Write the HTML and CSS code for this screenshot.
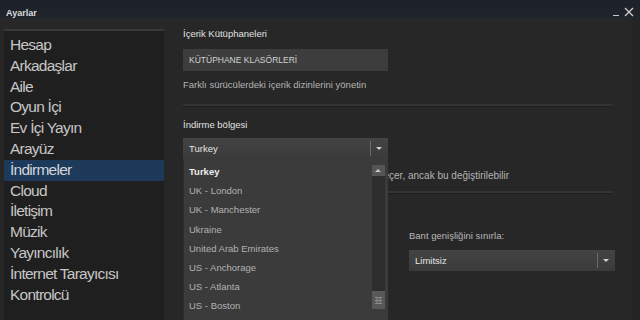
FILE: index.html
```html
<!DOCTYPE html>
<html lang="tr">
<head>
<meta charset="UTF-8">
<meta name="viewport" content="width=device-width, initial-scale=1.0">
<title>Ayarlar</title>
<link rel="stylesheet" href="styles.css">
</head>
<body>

<div class="window">
    <div class="titlebar">
        <span class="title">Ayarlar</span>
        <span class="controls">
            <span class="min"></span>
            <svg class="close" width="10" height="10" viewBox="0 0 10 10"><path d="M1 1 L9 9 M9 1 L1 9" stroke="#c8c8c8" stroke-width="1.4"/></svg>
        </span>
    </div>

    <div class="main">
        <ul class="sidebar">
            <li>Hesap</li>
            <li>Arkadaşlar</li>
            <li>Aile</li>
            <li>Oyun İçi</li>
            <li>Ev İçi Yayın</li>
            <li>Arayüz</li>
            <li class="active">İndirmeler</li>
            <li>Cloud</li>
            <li>İletişim</li>
            <li>Müzik</li>
            <li>Yayıncılık</li>
            <li>İnternet Tarayıcısı</li>
            <li>Kontrolcü</li>
        </ul>

        <div class="content">
            <div class="heading">İçerik Kütüphaneleri</div>
            <div class="button">KÜTÜPHANE KLASÖRLERİ</div>
            <div class="desc">Farklı sürücülerdeki içerik dizinlerini yönetin</div>
            <div class="rule"></div>

            <div class="heading second">İndirme bölgesi</div>
            <div class="select-wrap">
                <div class="select">
                    <span>Turkey</span>
                    <span class="arrow"></span>
                </div>
                <div class="options">
                    <ul>
                        <li class="current">Turkey</li>
                        <li>UK - London</li>
                        <li>UK - Manchester</li>
                        <li>Ukraine</li>
                        <li>United Arab Emirates</li>
                        <li>US - Anchorage</li>
                        <li>US - Atlanta</li>
                        <li>US - Boston</li>
                    </ul>
                    <div class="scrollbar">
                        <div class="up"></div>
                        <div class="thumb">
                            <svg width="7" height="7" viewBox="0 0 7 7"><path d="M0 0.5H7M0 3.5H7M0 6.5H7M2 0V7M5 0V7" stroke="#8a8a8a" stroke-width="1"/></svg>
                        </div>
                    </div>
                </div>
            </div>
            <div class="desc tail">Steam indirme bölgesini seçer, ancak bu değiştirilebilir</div>
            <div class="rule short"></div>

            <div class="limits">
                <div class="col"></div>
                <div class="col">
                    <div class="label">Bant genişliğini sınırla:</div>
                    <div class="select wide">
                        <span>Limitsiz</span>
                        <span class="arrow"></span>
                    </div>
                </div>
            </div>
        </div>
    </div>
</div>

</body>
</html>
```

FILE: styles.css
```css
/* Steam settings window */
body {
    margin: 0;
    background-color: #262626;
    font-family: "Liberation Sans", Arial, sans-serif;
}

.window {
    width: 640px;
    height: 320px;
    overflow: hidden;
    display: flex;
    flex-direction: column;
    background-color: #272727;
}

.titlebar {
    height: 18px;
    display: flex;
    align-items: center;
    justify-content: space-between;
    padding: 0 6px;
    background: linear-gradient(#1d222a, #20242b);
}

.title {
    color: #dcdcdc;
    font-size: 9px;
    font-weight: bold;
    margin-top: 7px;
}

.controls {
    display: flex;
    align-items: flex-end;
    gap: 5px;
    margin-top: 5px;
}

.min {
    width: 6px;
    height: 1px;
    background-color: #c8c8c8;
    margin-bottom: 1px;
}

.main {
    flex: 1;
    display: flex;
    padding-top: 11px;
    border-right: 8px solid #242424;
}

.sidebar {
    flex-shrink: 0;
    list-style: none;
    margin: 0 0 0 4px;
    padding: 4px 0 0 0;
    width: 160px;
    background-color: #1f1f1f;
    border-top: 2px solid #383838;
}

.sidebar li {
    height: 20.8px;
    line-height: 20.8px;
    padding-left: 6px;
    font-size: 15.5px;
    letter-spacing: -0.75px;
    color: #c6c6c6;
}

.sidebar li.active {
    background-color: #1e3a5a;
    color: #d0d6dc;
}

.content {
    flex: 1;
    min-width: 0;
    padding: 0 19px 0 19px;
    font-size: 9.5px;
    color: #b4b4b4;
}

.heading {
    color: #e0e0e0;
    margin-top: -1px;
    height: 12px;
    line-height: 12px;
}

.heading.second {
    margin-top: 0;
}

.button {
    margin-top: 9px;
    width: 199px;
    height: 22px;
    line-height: 22px;
    padding-left: 6px;
    background-color: #3d3d3d;
    color: #d2d2d2;
    font-size: 8.5px;
}

.desc {
    margin-top: 8px;
    line-height: 12px;
    white-space: nowrap;
}

.desc.tail {
    margin-top: 11px;
    padding-left: 86px;
    font-size: 10px;
}

.rule {
    margin: 13px 0 12px 0;
    height: 2px;
    background-color: #333333;
    border-bottom: 1px solid #1f1f1f;
}

.rule.short {
    margin-top: 9px;
}

.select-wrap {
    position: relative;
    margin-top: 7px;
}

.select {
    width: 205px;
    height: 21px;
    display: flex;
    align-items: center;
    justify-content: space-between;
    padding-left: 6px;
    box-sizing: border-box;
    background: linear-gradient(#444444, #3a3a3a);
    color: #e4e4e4;
    font-size: 9.5px;
}

.select.wide {
    width: 206px;
    margin-top: 8px;
}

.arrow {
    width: 17px;
    height: 15px;
    border-left: 1px solid #6a6a6a;
    position: relative;
}

.arrow:after {
    position: absolute;
    content: "";
    top: 6px;
    left: 5px;
    border-width: 3px 3.5px 0 3.5px;
    border-style: solid;
    border-color: #d0d0d0 transparent transparent transparent;
}

/* open dropdown list, lies over the page */
.options {
    position: absolute;
    top: 21px;
    left: 0;
    width: 204px;
    height: 170px;
    display: flex;
    background-color: #3b3b3b;
    border-left: 1px solid #2e2e2e;
    z-index: 1;
}

.options ul {
    flex: 1;
    list-style: none;
    margin: 0;
    padding: 3px 0 0 0;
}

.options li {
    height: 19.2px;
    line-height: 19.2px;
    padding-left: 5px;
    color: #b2b2b2;
}

.options li.current {
    color: #ececec;
    font-weight: bold;
}

.scrollbar {
    width: 13px;
    margin: 6px 3px 0 0;
    display: flex;
    flex-direction: column;
    justify-content: space-between;
    background-color: #2d2d2d;
    height: 144px;
}

.up {
    height: 11px;
    background-color: #555555;
    position: relative;
}

.up:after {
    position: absolute;
    content: "";
    top: 4px;
    left: 3px;
    border-width: 0 3.5px 3px 3.5px;
    border-style: solid;
    border-color: transparent transparent #c8c8c8 transparent;
}

.thumb {
    height: 18px;
    background-color: #585858;
    display: flex;
    align-items: center;
    justify-content: center;
}

.limits {
    display: flex;
}

.limits .col {
    flex-shrink: 0;
    width: 226px;
}

.limits .col + .col {
    flex: 1;
    width: auto;
}

.label {
    margin-top: 24px;
    line-height: 12px;
    color: #b8b8b8;
}
```
